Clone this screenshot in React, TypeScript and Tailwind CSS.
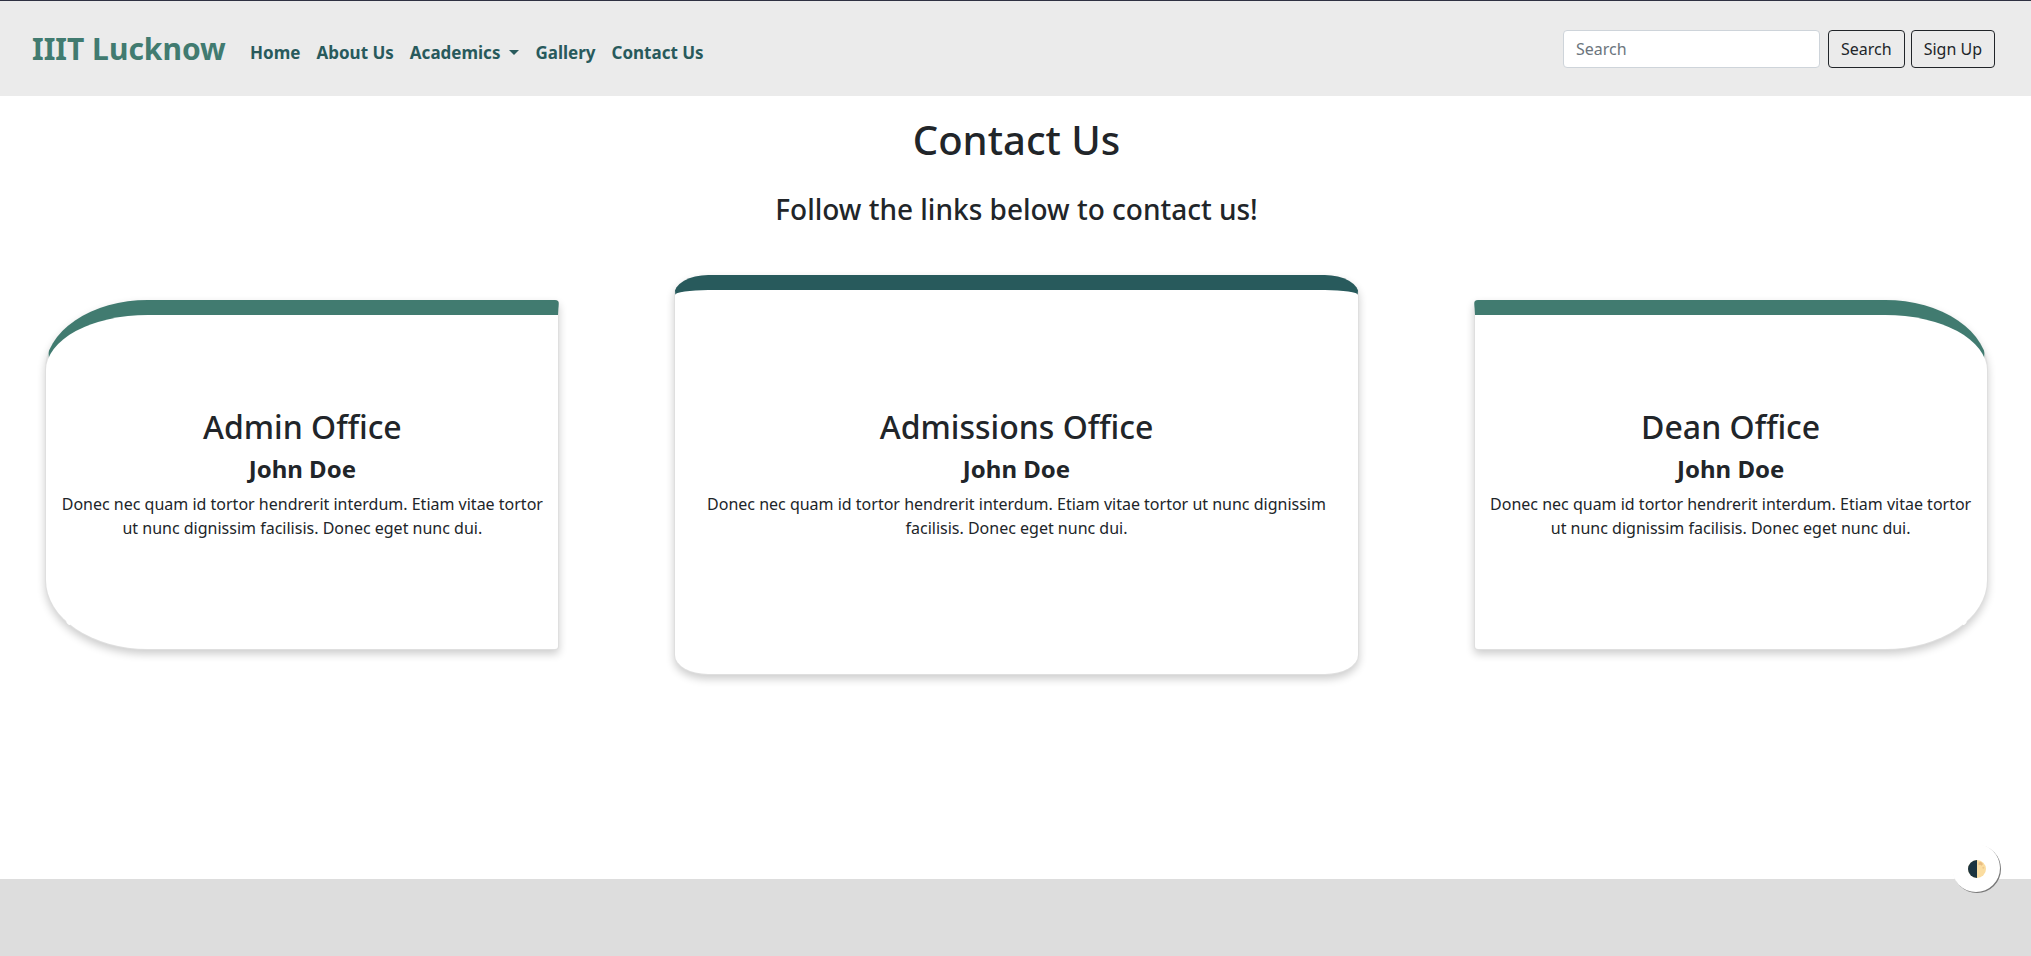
const navLinks = ['Home', 'About Us', 'Academics', 'Gallery', 'Contact Us'];

function Card({ title, shape, body }: { title: string; shape: string; body: string }) {
  return (
    <article
      className={`flex flex-col items-center justify-center border border-t-[15px] border-black/[0.125] bg-white bg-clip-border text-center shadow-[0_4px_8px_0_rgba(0,0,0,0.2)] ${shape}`}
    >
      <div className={body}>
        <h3 className="mb-2 text-[32px] leading-[38.4px] font-medium">{title}</h3>
        <h4 className="mb-2 text-2xl leading-[28.8px] font-bold">John Doe</h4>
        <p className="mb-[15px] text-base leading-6">
          Donec nec quam id tortor hendrerit interdum. Etiam vitae tortor ut nunc dignissim facilisis. Donec eget nunc
          dui.
        </p>
      </div>
    </article>
  );
}

export default function App() {
  return (
    <div className="flex h-[956px] flex-col overflow-hidden bg-white font-['Noto_Sans',sans-serif] text-[#212529]">
      <header className="flex h-24 shrink-0 items-center border-t border-[#2f3142] bg-[#ebebeb] pr-9 pl-8">
        <a className="mr-[24.3px] text-[30px] leading-[45px] font-bold text-[#417b70]">IIIT Lucknow</a>
        <nav className="mt-2 flex gap-4 text-[17px] leading-6 font-bold text-[#285a5c]">
          {navLinks.map((label) => (
            <a key={label} className="flex items-center">
              {label}
              {label === 'Academics' && (
                <span className="ml-[9px] border-x-[5px] border-t-[5px] border-x-transparent border-t-[#285a5c]" />
              )}
            </a>
          ))}
        </nav>
        <form className="ml-auto flex">
          <input
            placeholder="Search"
            className="mr-2 h-[38px] w-[257px] rounded border border-[#ced4da] bg-white px-3 text-base placeholder:text-[#6c757d]"
          />
          <button type="button" className="mr-1.5 h-[38px] rounded border border-[#212529] px-3 text-base">
            Search
          </button>
          <button type="button" className="h-[38px] rounded border border-[#212529] px-3 text-base">
            Sign Up
          </button>
        </form>
      </header>
      <main className="flex grow flex-col items-center">
        <h1 className="mt-5 pl-[2px] text-[40px] leading-[48px] font-medium">Contact Us</h1>
        <h2 className="mt-[29px] pl-[2px] text-[28px] leading-[33.6px] font-medium">
          Follow the links below to contact us!
        </h2>
        <section className="mt-12 flex w-full items-center justify-between pr-[43.4px] pl-[45.4px]">
          <Card
            title="Admin Office"
            body="px-3"
            shape="h-[350px] w-[513.9px] rounded-[4px] rounded-l-[20%] border-t-[#417b70]"
          />
          <Card title="Admissions Office" body="px-5" shape="h-[400px] w-[684.8px] rounded-[5%] border-t-[#285a5c]" />
          <Card
            title="Dean Office"
            body="px-3"
            shape="h-[350px] w-[513.9px] rounded-[4px] rounded-r-[20%] border-t-[#417b70]"
          />
        </section>
      </main>
      <footer className="relative h-[77px] shrink-0 bg-[#ddd]">
        <button
          type="button"
          aria-label="Toggle theme"
          className="absolute -top-[35px] right-[31px] flex size-12 items-center justify-center rounded-full bg-white pt-px pl-0.5 shadow-[1px_1px_0_#777]"
        >
          <svg viewBox="0 0 18 18" className="size-[18px]">
            <circle cx="9" cy="9" r="9" fill="#fbdda0" />
            <path d="M9 0a9 9 0 0 0 0 18z" fill="#1c343f" />
            <path d="M10.5 2.5l2.5-.8 2 2.2-1.2 1.8-1.6-1-1.7.6z" fill="#e9bd82" />
            <circle cx="15.3" cy="7.8" r="1" fill="#efc88d" />
          </svg>
        </button>
      </footer>
    </div>
  );
}
